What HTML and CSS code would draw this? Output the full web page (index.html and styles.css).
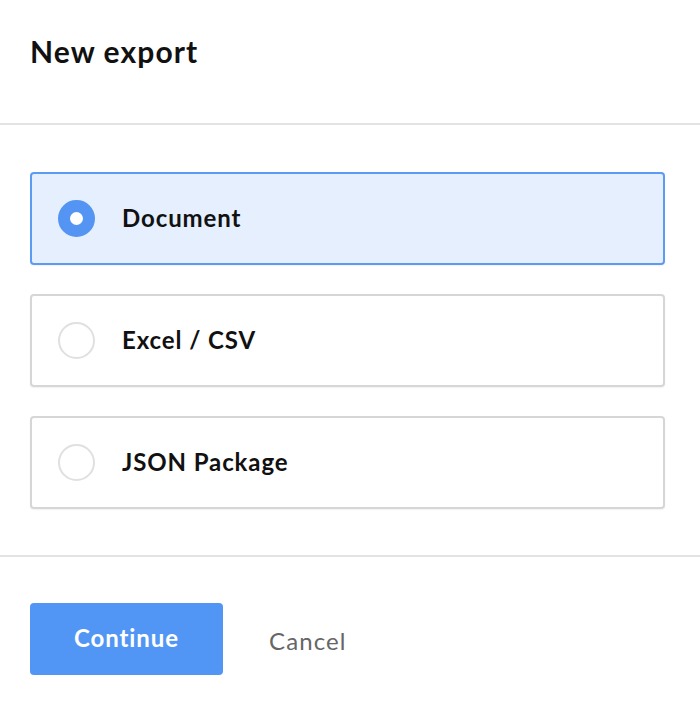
FILE: index.html
```html
<!DOCTYPE html>
<html>
<head>
<meta charset="utf-8">
<link rel="stylesheet" href="styles.css">
</head>
<body>
<div class="dialog">
  <header class="header">
    <h1 class="title">New export</h1>
  </header>
  <div class="options">
    <label class="option selected">
      <span class="radio"></span>
      <span class="label">Document</span>
    </label>
    <label class="option">
      <span class="radio"></span>
      <span class="label">Excel / CSV</span>
    </label>
    <label class="option">
      <span class="radio"></span>
      <span class="label">JSON Package</span>
    </label>
  </div>
  <footer class="footer">
    <button class="btn-primary">Continue</button>
    <button class="btn-link">Cancel</button>
  </footer>
</div>
</body>
</html>
```

FILE: styles.css
```css
* { box-sizing: border-box; }
html, body {
  margin: 0;
  padding: 0;
  background: #ffffff;
  font-family: "Lato", "Open Sans", sans-serif;
  color: #111;
}
.dialog {
  width: 700px;
  height: 706px;
  display: flex;
  flex-direction: column;
}
.header {
  height: 125px;
  padding: 32px 30px 0;
  border-bottom: 2px solid #e3e3e3;
}
.title {
  margin: 0;
  font-size: 30px;
  font-weight: 700;
  line-height: 38px;
  letter-spacing: 1.1px;
  color: #111;
}
.options {
  padding: 47px 35px 46px 30px;
  display: flex;
  flex-direction: column;
  gap: 29px;
  border-bottom: 2px solid #e3e3e3;
}
.option {
  height: 93px;
  border: 2px solid #d6d6d6;
  border-radius: 4px;
  display: flex;
  align-items: center;
  padding-left: 26px;
  gap: 27px;
  background: #fff;
  box-shadow: 0 1px 2px rgba(0,0,0,0.06);
}
.option.selected {
  border-color: #5b9bf3;
  background: #e5effe;
}
.radio {
  width: 37px;
  height: 37px;
  border-radius: 50%;
  border: 2px solid #e0e0e0;
  background: #fff;
  flex: none;
}
.option.selected .radio {
  border: 12px solid #5495f4;
  background: #fff;
}
.label {
  font-size: 24px;
  font-weight: 700;
  letter-spacing: 0.9px;
  color: #111;
  margin-top: -3px;
}
.footer {
  padding: 46px 30px 0;
  display: flex;
  align-items: center;
  gap: 46px;
}
.btn-primary {
  width: 193px;
  height: 72px;
  border: none;
  border-radius: 4px;
  background: #5296f5;
  color: #fff;
  font-family: inherit;
  font-size: 24px;
  font-weight: 700;
  letter-spacing: 0.9px;
  padding: 0 0 4px;
}
.btn-link {
  border: none;
  background: none;
  color: #666;
  font-family: inherit;
  font-size: 24px;
  font-weight: 400;
  letter-spacing: 1.1px;
  padding: 0;
  margin-top: 2px;
}
```
